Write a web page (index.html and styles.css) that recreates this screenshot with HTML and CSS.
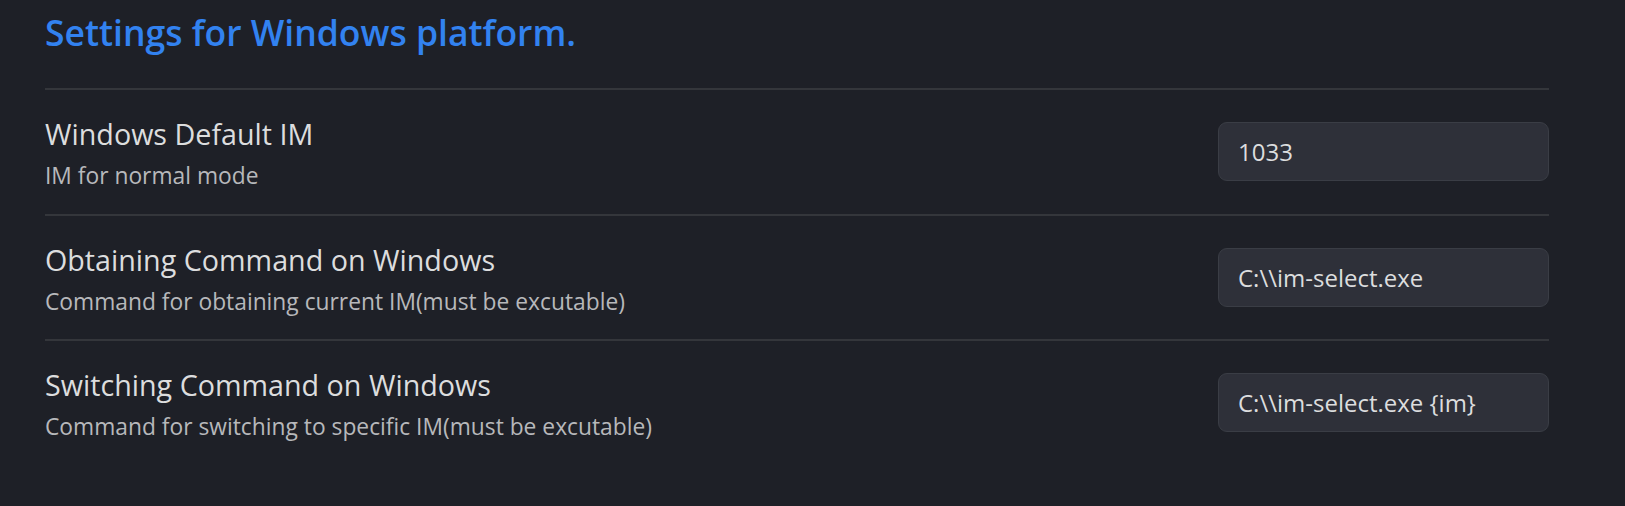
FILE: index.html
```html
<!DOCTYPE html>
<html lang="en">
<head>
<meta charset="utf-8">
<title>Settings for Windows platform</title>
<link rel="stylesheet" href="styles.css">
</head>
<body>
<div class="settings">
  <h3 class="heading">Settings for Windows platform.</h3>
  <div class="setting-item">
    <div class="info">
      <div class="name">Windows Default IM</div>
      <div class="desc">IM for normal mode</div>
    </div>
    <input class="field" type="text" value="1033">
  </div>
  <div class="setting-item">
    <div class="info">
      <div class="name">Obtaining Command on Windows</div>
      <div class="desc">Command for obtaining current IM(must be excutable)</div>
    </div>
    <input class="field" type="text" value="C:\\im-select.exe">
  </div>
  <div class="setting-item">
    <div class="info">
      <div class="name">Switching Command on Windows</div>
      <div class="desc">Command for switching to specific IM(must be excutable)</div>
    </div>
    <input class="field" type="text" value="C:\\im-select.exe {im}">
  </div>
</div>
</body>
</html>
```

FILE: styles.css
```css
html, body {
  margin: 0;
  padding: 0;
  background: #1e2027;
  height: 100%;
}

body {
  font-family: "Open Sans", Lato, sans-serif;
  color: #dcddde;
}

.settings {
  padding: 0 76px 0 45px;
}

.heading {
  margin: 0;
  padding-top: 10px;
  font-size: 35.5px;
  line-height: 44px;
  font-weight: 600;
  color: #3282f0;
  height: 78px;
}

.setting-item {
  display: flex;
  align-items: center;
  justify-content: space-between;
  border-top: 2px solid #34363b;
  padding: 26px 0 23.5px;
}

.info {
  display: flex;
  flex-direction: column;
}

.name {
  font-size: 28.7px;
  line-height: 36px;
  color: #dcddde;
}

.desc {
  margin-top: 10px;
  font-size: 22.8px;
  line-height: 28px;
  color: #b7b8bb;
}

.field {
  box-sizing: border-box;
  width: 331px;
  height: 59px;
  margin-bottom: 3px;
  padding: 0 19px;
  background: #2e3039;
  border: 1px solid #3a3d45;
  border-radius: 9px;
  font-family: "Open Sans", Lato, sans-serif;
  font-size: 24px;
  color: #dcddde;
  outline: none;
}
```
